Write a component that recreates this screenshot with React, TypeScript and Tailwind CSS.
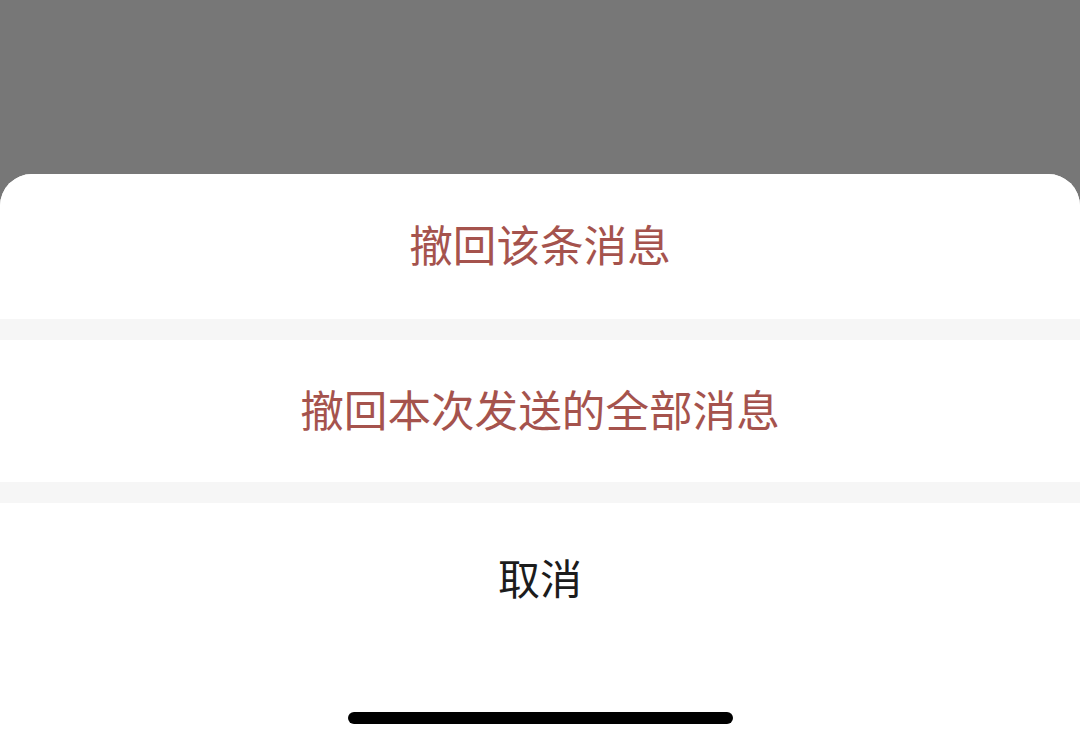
export default function App() {
  const font = { fontFamily: '"Noto Sans CJK SC", "Noto Sans", sans-serif' };
  return (
    <div className="w-[1080px] h-[734px] bg-[#777777] flex flex-col overflow-hidden" style={font}>
      <div className="h-[174px] shrink-0" />
      <div className="flex-1 flex flex-col bg-[#f6f6f6] rounded-t-[32px] overflow-hidden">
        <button className="h-[145px] shrink-0 bg-white flex items-center justify-center pb-[5px] text-[43.6px] text-[#a5534d] leading-none">
          撤回该条消息
        </button>
        <div className="h-[21px] shrink-0" />
        <button className="h-[142px] shrink-0 bg-white flex items-center justify-center pb-[4px] text-[43.6px] text-[#a5534d] leading-none">
          撤回本次发送的全部消息
        </button>
        <div className="h-[21px] shrink-0" />
        <div className="flex-1 bg-white flex flex-col items-center">
          <button className="h-[150px] w-full flex items-center justify-center pb-[2px] text-[42px] text-[#1c1c1c] leading-none">
            取消
          </button>
          <div className="mt-[59px] w-[385px] h-[12px] rounded-full bg-black" />
        </div>
      </div>
    </div>
  );
}
